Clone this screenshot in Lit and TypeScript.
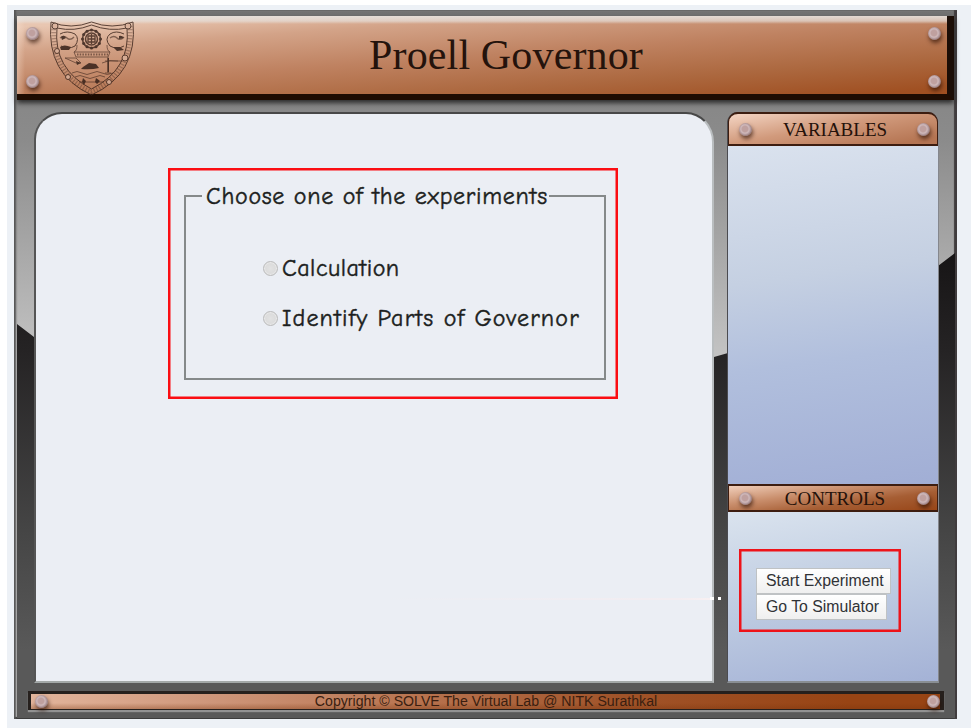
import { LitElement, html, css, svg } from "lit";
import { customElement, property } from "lit/decorators.js";

@customElement("lab-rivet")
class LabRivet extends LitElement {
  static styles = css`
    :host {
      display: block;
      width: 13px;
      height: 13px;
      flex: none;
      border-radius: 50%;
      background: radial-gradient(circle at 46% 46%, #bfa09f 0 28%, #cfb9bb 42%, #b1979a 58%, #80696b 75%);
      box-shadow: 1px 3px 4px rgba(40, 12, 0, 0.65);
    }
  `;
  render() {
    return html``;
  }
}

@customElement("lab-crest")
class LabCrest extends LitElement {
  static styles = css`
    :host {
      display: block;
      width: 84px;
      height: 75px;
    }
    .crest {
      display: block;
      fill: none;
      stroke: #3b241b;
      stroke-width: 1;
      opacity: 0.8;
    }
    .solid {
      fill: #2c1a14;
      stroke: none;
    }
    .band {
      stroke: #4b2f24;
      stroke-width: 5;
      stroke-dasharray: 1.2 1.8;
      opacity: 0.45;
    }
    .soft {
      opacity: 0.7;
    }
    .spot {
      fill: #d9b09a;
    }
  `;
  render() {
    const gear = Array.from({ length: 12 }, (_, i) => {
      const a = (i * Math.PI) / 6;
      return svg`<circle class="solid" cx=${41.5 + 9 * Math.cos(a)} cy=${18 + 9 * Math.sin(a)} r="1.5"/>`;
    });
    return html`<svg class="crest" width="84" height="75" viewBox="0 0 84 75">
      <path class="band" d="M4 5C2 36 15 60 41 71C68 60 81 36 80 5" />
      <path d="M1 1Q21 9 41.500 1Q62 9 83 1Q88 53 41.500 74Q-4 53 1 1Z" />
      <path d="M7 7Q24 11 41.500 4Q60 11 77 7Q81 48 41.500 68Q3 48 7 7Z" />
      <circle class="spot" cx="5" cy="5" r="3" />
      <circle class="spot" cx="78" cy="5" r="3" />
      <circle class="spot" cx="7" cy="30" r="2.500" />
      <circle class="spot" cx="75" cy="37" r="3" />
      <circle class="spot" cx="18" cy="56" r="2.500" />
      <circle class="spot" cx="59" cy="61" r="2.500" />
      <circle cx="41.500" cy="18" r="9" stroke-width="1.600" />
      <circle cx="41.500" cy="18" r="6" stroke-width="1.500" />
      ${gear}
      <path d="M38 15h7v6h-7zM38 18h7M41.500 13v10" stroke-width="1.300" />
      <path d="M10 13q7-4 15 0q5 5 0 12q-7 4-14 0M74 13q-8-4-14 0q-6 5 0 12q7 4 14 0" />
      <path d="M10 17q4-3 7 0t7-1M60 17q4-3 7 0t7-1" stroke-width="1.400" class="soft" />
      <path class="solid" d="M10 26q4-3 11 0l-2 3h-8zM63 26l7 0 4 3-7 1zM11 16q3-3 5 1l-4 2zM69 15q3-1 5 2l-5 1z" />
      <path d="M24 31h36l-2 5H26zM27 24q0 6-3 7M57 24q0 6 3 7" class="soft" />
      <path d="M27 33.500h31" stroke-width="2" stroke-dasharray="1.500 1.200" opacity="0.7" />
      <path d="M15 37h11l5 5h-5zM55 40h17M52 42q8-4 16-2M58 36v16M55 52h6" class="soft" />
      <path class="solid" d="M33 46l6-4 7 1 3 4q-8 2-18 1zM26 40l5 2-4 2zM57.500 37h1.500v14h-1.500z" />
      <path d="M22 52q5-3 10 0t10 0t10 0t11 0M25 56q5-3 10 0t10 0t10 0M29 61h25" class="soft" />
      <path class="solid" d="M33 57l3 3-2 4-2-3zM46 57l4 3-3 3-2-2z" />
    </svg>`;
  }
}

@customElement("lab-plate")
class LabPlate extends LitElement {
  @property() label = "";
  static styles = css`
    :host {
      box-sizing: border-box;
      display: flex;
      align-items: center;
      justify-content: space-between;
      padding: 0 7px 0 10px;
      border: 2px solid #3d1d10;
      border-width: 2px 1px 2px 1px;
      color: #24110a;
      font: 19px/26px "Liberation Serif", serif;
    }
    .label {
      padding: 1px 0 0 1px;
      line-height: 23px;
      white-space: nowrap;
    }
  `;
  render() {
    return html`<lab-rivet></lab-rivet><span class="label">${this.label}</span><lab-rivet></lab-rivet>`;
  }
}

@customElement("app-root")
class AppRoot extends LitElement {
  static styles = css`
    :host {
      display: block;
      box-sizing: border-box;
      width: 975px;
      height: 728px;
      padding: 5px 4px 0 7px;
      overflow: hidden;
      background: #fff;
      --serif: "Liberation Serif", serif;
      --sans: "Liberation Sans", sans-serif;
      --hand: "Comic Sans MS", "Comic Neue", "Noto Sans", cursive;
    }
    * {
      box-sizing: border-box;
    }
    .page {
      height: 723px;
      padding: 5px 0 0 7px;
      background: #edf1f6;
    }
    .frame {
      position: relative;
      isolation: isolate;
      width: 943px;
      height: 709px;
      padding: 6px 3px 0;
      background: linear-gradient(#727272 0, #888 100px, #8b8b8b 130px, #c4c4c4 350px);
      box-shadow: inset 2px 0 2px #555, inset -3px 0 1px #403c3e, inset 0 -2px 1px #333, inset 0 2px 1px #777;
    }
    .frame::before {
      content: "";
      position: absolute;
      inset: 0 2px 1px 3px;
      z-index: -1;
      background: linear-gradient(#171516 245px, #252324 340px, #454545 520px, #595959 640px);
      clip-path: polygon(0 314px, 17px 327px, 150px 385px, 500px 385px, 697px 347px, 711px 343px, 921px 256px, 100% 243px, 100% 100%, 0 100%);
    }
    .header {
      display: flex;
      align-items: stretch;
      height: 84px;
      padding: 11px 6px 6px 9px;
      border-right: 7px solid #1b0d06;
      border-bottom: 6px solid #1e0c02;
      background:
        linear-gradient(rgba(230, 226, 222, 0.9) 0, rgba(230, 226, 222, 0.65) 5px, transparent 8px),
        linear-gradient(90deg, rgba(255, 235, 220, 0.35), transparent 8px),
        linear-gradient(176deg, #e8c6b1 8%, #d3a388 25%, #bf8261 50%, #ac683f 75%, #a05022 96%);
      box-shadow: 0 3px 5px #2b2b2b;
    }
    .rivets {
      display: flex;
      flex-direction: column;
      justify-content: space-between;
    }
    .crest {
      margin: -6px 0 0 11px;
    }
    .title {
      flex: 1;
      margin: 0 58px 0 0;
      padding-left: 8px;
      text-align: center;
      color: #24130c;
      font: 400 42px/56px var(--serif);
      letter-spacing: 0.15px;
    }
    .body {
      display: grid;
      grid-template-columns: 680px 212px;
      gap: 13px;
      height: 571px;
      margin: 12px 0 0 17px;
    }
    .stage {
      border: 2px solid #555;
      border-top-color: #484848;
      border-right-color: #b9bdbf;
      border-bottom-color: #a3a8a8;
      border-radius: 28px 28px 0 0 / 27px 30px 0 0;
      padding: 54px 0 0 132px;
      background: #ebeef4;
    }
    .choices {
      width: 450px;
      height: 231px;
      padding: 11px 12px 0 14px;
      border: 2px solid #fb0d12;
      box-shadow: inset 0 0 0 0.5px #fb0d12;
    }
    fieldset {
      min-width: 0;
      width: 422px;
      height: 199px;
      margin: 0;
      padding: 0;
      border: 2px solid #85898a;
      color: #1c1e20;
      font: 24px/30px var(--hand);
      -webkit-text-stroke: 0.45px #1c1e20;
    }
    legend {
      margin-left: 16px;
      padding: 1px 1px 0 4px;
      line-height: 29px;
      white-space: nowrap;
    }
    .options {
      display: grid;
      gap: 20px;
      padding: 42px 0 0 77px;
    }
    .option {
      display: flex;
      align-items: center;
      gap: 4px;
      white-space: nowrap;
    }
    .radio {
      appearance: none;
      width: 15px;
      height: 15px;
      margin: 1px 0 0;
      border: 1px solid #bbb;
      border-radius: 50%;
      background: radial-gradient(#e2e2e2, #d6d6d6);
      box-shadow: inset 0 0 1px 1px #eaeaea;
    }
    .legend-text { letter-spacing: 0.72px; }
    .calc { letter-spacing: 0.5px; }
    .parts { letter-spacing: 1.15px; }
    .side {
      display: grid;
      grid-template-rows: 34px 338px 28px 1fr;
      border: 1px solid #4b4b50;
      border-right-color: #85878d;
      border-bottom: 2px solid #898e93;
      border-top: 0;
      border-radius: 11px 11px 0 0;
      background: linear-gradient(#3b2820, #4b4b50);
    }
    .top-plate {
      border-radius: 10px 10px 0 0;
      background: linear-gradient(170deg, #f4d5c4, #d19a7c 45%, #b57553 90%);
    }
    .mid-plate {
      background: linear-gradient(172deg, #f1cfbb 0, #c98e6c 35%, #a65e34 65%, #984618);
    }
    .variables {
      background: linear-gradient(172deg, #dae2ee, #c5d0e2 38%, #b1bfdd 62%, #a1aed5);
    }
    .controls {
      padding: 37px 0 0 11px;
      background: linear-gradient(170deg, #dae3ee, #c2cfe3 42%, #a4b2d6);
    }
    .actions {
      display: flex;
      flex-direction: column;
      align-items: flex-start;
      width: 162px;
      height: 83px;
      padding: 17px 0 0 15px;
      border: 2px solid #ee1319;
      box-shadow: inset 0 0 0 0.5px #ee1319;
    }
    button {
      height: 26px;
      padding: 0 8px 0 9px;
      border: 1px solid #bfc2c4;
      background: linear-gradient(#fff, #efefef);
      color: #303236;
      font: 15.800px/22px var(--sans);
      white-space: nowrap;
    }
    .start { width: 135px; }
    .simulator { width: 131px; }
    .footer {
      display: flex;
      align-items: center;
      justify-content: space-between;
      height: 19px;
      margin: 8px 10px 0 11px;
      padding: 0 0 0 4px;
      border: 2px solid #26201d;
      border-width: 3px 4px 1px 3px;
      background:
        linear-gradient(transparent 60%, rgba(120, 50, 10, 0.35)),
        linear-gradient(90deg, #e3b59c 0, #ce967a 20%, #b87450 42%, #a05329 65%, #984414 90%);
      box-shadow: 0 2px 1px #929292;
    }
    .copyright {
      margin-top: -2px;
      padding-right: 3px;
      color: #3a1e10;
      font: 14.150px/16px var(--sans);
      white-space: nowrap;
    }
    .streak {
      position: absolute;
      left: 370px;
      top: 588px;
      width: 327px;
      height: 2px;
      background: linear-gradient(90deg, transparent, #f3edf1 90%, #f8f0f2);
    }
    .dots {
      position: absolute;
      left: 696px;
      top: 587px;
      width: 11px;
      height: 3px;
      background: linear-gradient(90deg, #fff 4px, transparent 4px 8px, #fff 8px);
    }
  `;

  render() {
    return html`
      <div class="page">
        <div class="frame">
          <header class="header">
            <div class="rivets"><lab-rivet></lab-rivet><lab-rivet></lab-rivet></div>
            <lab-crest class="crest"></lab-crest>
            <h1 class="title">Proell Governor</h1>
            <div class="rivets"><lab-rivet></lab-rivet><lab-rivet></lab-rivet></div>
          </header>
          <div class="body">
            <main class="stage">
              <div class="choices">
                <fieldset>
                  <legend><span class="legend-text">Choose one of the experiments</span></legend>
                  <div class="options">
                    <label class="option"><input class="radio" type="radio" name="experiment" /><span class="calc">Calculation</span></label>
                    <label class="option"><input class="radio" type="radio" name="experiment" /><span class="parts">Identify Parts of Governor</span></label>
                  </div>
                </fieldset>
              </div>
            </main>
            <aside class="side">
              <lab-plate class="top-plate" label="VARIABLES"></lab-plate>
              <section class="variables"></section>
              <lab-plate class="mid-plate" label="CONTROLS"></lab-plate>
              <section class="controls">
                <div class="actions">
                  <button class="start">Start Experiment</button>
                  <button class="simulator">Go To Simulator</button>
                </div>
              </section>
            </aside>
          </div>
          <footer class="footer">
            <lab-rivet></lab-rivet>
            <span class="copyright">Copyright © SOLVE The Virtual Lab @ NITK Surathkal</span>
            <lab-rivet></lab-rivet>
          </footer>
          <div class="streak"></div>
          <div class="dots"></div>
        </div>
      </div>
    `;
  }
}
